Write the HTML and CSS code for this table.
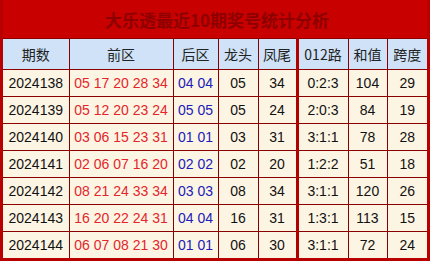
FILE: index.html
```html
<!DOCTYPE html>
<html lang="zh">
<head>
<meta charset="utf-8">
<link rel="stylesheet" href="styles.css">
</head>
<body>
<div class="wrap">
  <div class="title">大乐透最近10期奖号统计分析</div>
  <table class="grid">
    <colgroup>
      <col class="c1"><col class="c2"><col class="c3"><col class="c4"><col class="c5"><col class="c6"><col class="c7"><col class="c8">
    </colgroup>
    <thead>
      <tr><th>期数</th><th>前区</th><th>后区</th><th>龙头</th><th>凤尾</th><th class="split">012路</th><th>和值</th><th>跨度</th></tr>
    </thead>
    <tbody>
      <tr><td>2024138</td><td class="red">05 17 20 28 34</td><td class="blue">04 04</td><td>05</td><td>34</td><td class="split">0:2:3</td><td>104</td><td>29</td></tr>
      <tr><td>2024139</td><td class="red">05 12 20 23 24</td><td class="blue">05 05</td><td>05</td><td>24</td><td class="split">2:0:3</td><td>84</td><td>19</td></tr>
      <tr><td>2024140</td><td class="red">03 06 15 23 31</td><td class="blue">01 01</td><td>03</td><td>31</td><td class="split">3:1:1</td><td>78</td><td>28</td></tr>
      <tr><td>2024141</td><td class="red">02 06 07 16 20</td><td class="blue">02 02</td><td>02</td><td>20</td><td class="split">1:2:2</td><td>51</td><td>18</td></tr>
      <tr><td>2024142</td><td class="red">08 21 24 33 34</td><td class="blue">03 03</td><td>08</td><td>34</td><td class="split">3:1:1</td><td>120</td><td>26</td></tr>
      <tr><td>2024143</td><td class="red">16 20 22 24 31</td><td class="blue">04 04</td><td>16</td><td>31</td><td class="split">1:3:1</td><td>113</td><td>15</td></tr>
      <tr><td>2024144</td><td class="red">06 07 08 21 30</td><td class="blue">01 01</td><td>06</td><td>30</td><td class="split">3:1:1</td><td>72</td><td>24</td></tr>
    </tbody>
  </table>
</div>
</body>
</html>
```
FILE: styles.css
```css
html, body {
  margin: 0;
  padding: 0;
  background: #ffffff;
}
.wrap {
  width: 430px;
  box-sizing: border-box;
  border: 3px solid #b80000;
  border-top: none;
  background: #c80000;
}
.title {
  height: 38px;
  display: flex;
  align-items: center;
  justify-content: center;
  padding-left: 4px;
  font-family: "Noto Sans CJK SC", "Liberation Sans", sans-serif;
  font-size: 17px;
  font-weight: bold;
  color: #8e0000;
  letter-spacing: 0px;
}
.grid {
  width: 424px;
  border-collapse: collapse;
  table-layout: fixed;
}
.c1 { width: 66px; }
.c2 { width: 104px; }
.c3 { width: 45px; }
.c4 { width: 40px; }
.c5 { width: 39px; }
.c6 { width: 51px; }
.c7 { width: 39px; }
.c8 { width: 40px; }
.grid th, .grid td {
  border: 1px solid #8a0000;
  padding: 0;
  text-align: center;
  white-space: nowrap;
}
.grid th {
  height: 30px;
  background: #cfe2f7;
  font-family: "Noto Sans CJK SC", "Liberation Sans", sans-serif;
  font-size: 14px;
  font-weight: normal;
  color: #222222;
}
.grid td {
  height: 26px;
  background: #fdf5e4;
  font-family: "Liberation Sans", Arial, sans-serif;
  font-size: 14px;
  color: #111111;
}
.grid tr > :first-child { border-left: none; }
.grid tr > :last-child { border-right: none; }
.grid tbody tr:last-child td { border-bottom: none; }
.grid .split { border-left: 3px solid #b00000; }
.grid td.red { color: #e3262b; }
.grid td.blue { color: #2020b8; }
```
